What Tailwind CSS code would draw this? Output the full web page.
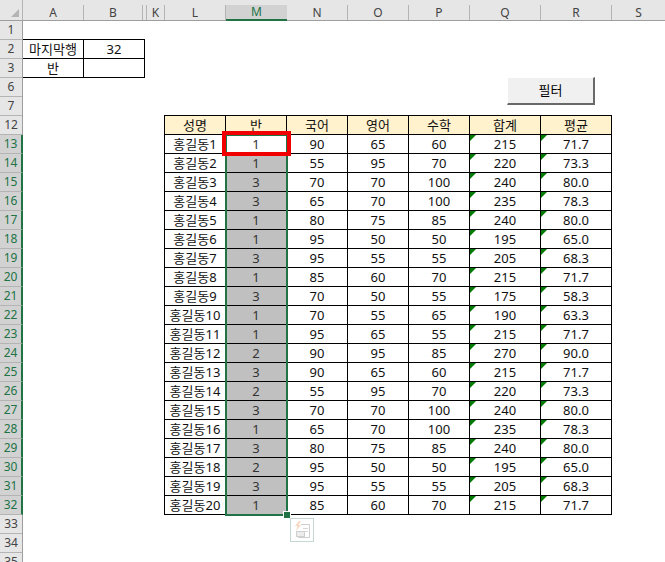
<!DOCTYPE html>
<html lang="ko">

<head>
  <meta charset="UTF-8" />
  <title>Sheet</title>
  <script src="https://cdn.jsdelivr.net/npm/@tailwindcss/browser@4"></script>
</head>

<body class="bg-white overflow-hidden">
  <div class="w-[665px] h-[562px] overflow-hidden flex flex-col text-[13px] leading-none text-[#111] font-['Noto_Sans','Noto_Sans_CJK_KR',sans-serif]">

    <!-- Column headers -->
    <div class="flex shrink-0 h-[21px] pt-[5px] bg-[#e6e6e6] border-b border-[#9e9e9e] text-[12px] text-[#444]">
      <div class="w-[23px] -mt-[5px] h-[20px] shrink-0 border-r border-[#b4b4b4] flex items-end justify-end pr-[3px] pb-[3px]">
        <svg width="8" height="8" viewBox="0 0 8 8"><polygon points="8,0 8,8 0,8" fill="#b4b4b4" /></svg>
      </div>
      <div class="w-[61px] border-r border-[#b4b4b4] flex items-center justify-center">A</div>
      <div class="w-[59px] border-r border-[#b4b4b4] flex items-center justify-center">B</div>
      <div class="w-[4px] border-r border-[#b4b4b4]"></div>
      <div class="w-[18px] border-r border-[#b4b4b4] flex items-center justify-center">K</div>
      <div class="w-[61px] border-r border-[#b4b4b4] flex items-center justify-center">L</div>
      <div class="w-[61px] -mb-px bg-[#d2d2d2] border-b-2 border-[#217346] text-[#217346] flex items-center justify-center">M</div>
      <div class="w-[61px] border-r border-[#b4b4b4] flex items-center justify-center">N</div>
      <div class="w-[61px] border-r border-[#b4b4b4] flex items-center justify-center">O</div>
      <div class="w-[61px] border-r border-[#b4b4b4] flex items-center justify-center">P</div>
      <div class="w-[71px] border-r border-[#b4b4b4] flex items-center justify-center">Q</div>
      <div class="w-[71px] border-r border-[#b4b4b4] flex items-center justify-center">R</div>
      <div class="flex-1 flex items-center justify-center">S</div>
    </div>

    <div class="flex flex-1 min-h-0">
      <!-- Row headers -->
      <div id="rowHeads" class="w-[23px] shrink-0 bg-[#e6e6e6] border-r border-[#9e9e9e] text-[12px] text-[#444]"></div>

      <!-- Sheet -->
      <div class="relative flex-1">
        <div class="h-[18px]"></div>

        <div class="w-[122px] grid grid-cols-[61px_61px] border-t border-black">
          <div class="h-[19px] border-r border-b border-black flex items-center justify-center">마지막행</div>
          <div class="h-[19px] border-r border-b border-black flex items-center justify-center">32</div>
          <div class="h-[19px] border-r border-b border-black flex items-center justify-center">반</div>
          <div class="h-[19px] border-r border-b border-black"></div>
        </div>

        <div class="flex items-start h-[37px] pl-[484px]">
          <button class="-mt-px w-[88px] h-[28px] bg-[#f0f0f0] border-t border-l border-white border-r-2 border-b-2 border-r-[#696969] border-b-[#696969] text-[13px] text-black">필터</button>
        </div>

        <div id="scores" class="ml-[141px] w-[448px] grid grid-cols-[61px_61px_61px_61px_61px_71px_71px] border-t border-l border-black"></div>

        <!-- Selection, fill handle, red marker, paste options -->
        <div class="absolute left-[202px] top-[113px] w-[63px] h-[382px] border-2 border-[#217346]"></div>
        <div class="absolute left-[261px] top-[491px] w-[6px] h-[6px] bg-[#217346] outline outline-white"></div>
        <div class="absolute left-[199px] top-[110px] w-[69px] h-[25px] border-4 border-[#f00000]"></div>
        <div class="absolute left-[267px] top-[497px] w-[24px] h-[24px] bg-white border border-[#c6d9d0] flex items-center justify-center">
          <svg width="20" height="20" viewBox="0 0 20 20" fill="none">
            <path d="M9 4.500h8.500v13H6" stroke="#cfcfcf" stroke-width="1" />
            <path d="M11 8.500h5M11 11.500h5" stroke="#d6d6d6" stroke-width="1" />
            <rect x="4.500" y="11.500" width="8" height="5" fill="#ececec" stroke="#cfcfcf" stroke-width="1" />
            <path d="M7 1 3 6h2.500l-1.500 5 5-6H6.500L9 1z" fill="#f8d8c0" />
          </svg>
        </div>
      </div>
    </div>
  </div>

  <script>
    const rowNumbers = [1, 2, 3, 6, 7, 12];
    for (let n = 13; n <= 35; n++) rowNumbers.push(n);

    const rowHeads = document.getElementById("rowHeads");
    rowNumbers.forEach(n => {
      const el = document.createElement("div");
      el.textContent = n;
      if (n >= 13 && n <= 32) {
        el.className = "h-[19px] -mr-px bg-[#d2d2d2] border-b border-[#b4b4b4] border-r-2 border-r-[#217346] text-[#217346] flex items-center justify-center";
      } else {
        el.className = "h-[19px] border-b border-[#b4b4b4] flex items-center justify-center";
      }
      rowHeads.appendChild(el);
    });

    const headers = ["성명", "반", "국어", "영어", "수학", "합계", "평균"];
    const scores = [
      [1, 90, 65, 60, 215, "71.7"], [1, 55, 95, 70, 220, "73.3"], [3, 70, 70, 100, 240, "80.0"], [3, 65, 70, 100, 235, "78.3"],
      [1, 80, 75, 85, 240, "80.0"], [1, 95, 50, 50, 195, "65.0"], [3, 95, 55, 55, 205, "68.3"], [1, 85, 60, 70, 215, "71.7"],
      [3, 70, 50, 55, 175, "58.3"], [1, 70, 55, 65, 190, "63.3"], [1, 95, 65, 55, 215, "71.7"], [2, 90, 95, 85, 270, "90.0"],
      [3, 90, 65, 60, 215, "71.7"], [2, 55, 95, 70, 220, "73.3"], [3, 70, 70, 100, 240, "80.0"], [1, 65, 70, 100, 235, "78.3"],
      [3, 80, 75, 85, 240, "80.0"], [2, 95, 50, 50, 195, "65.0"], [3, 95, 55, 55, 205, "68.3"], [1, 85, 60, 70, 215, "71.7"],
    ];

    const table = document.getElementById("scores");
    const cellClass = "relative h-[19px] border-r border-b border-black flex items-center justify-center";
    const triangle = '<svg class="absolute left-0 top-0" width="6" height="6" viewBox="0 0 6 6"><polygon points="0,0 6,0 0,6" fill="#007a00" /></svg>';

    function addCell(text, extra, html) {
      const el = document.createElement("div");
      el.className = cellClass + " " + extra;
      el.innerHTML = (html || "") + text;
      table.appendChild(el);
    }

    headers.forEach(h => addCell(h, "bg-[#fff2cc]"));
    scores.forEach((row, i) => {
      addCell("홍길동" + (i + 1), "");
      row.forEach((v, col) => {
        if (col === 0) addCell(v, i === 0 ? "text-[#333]" : "bg-[#c0c0c0] text-[#333]");
        else if (col >= 4) addCell(v, "", triangle);
        else addCell(v, "");
      });
    });
  </script>
</body>

</html>
